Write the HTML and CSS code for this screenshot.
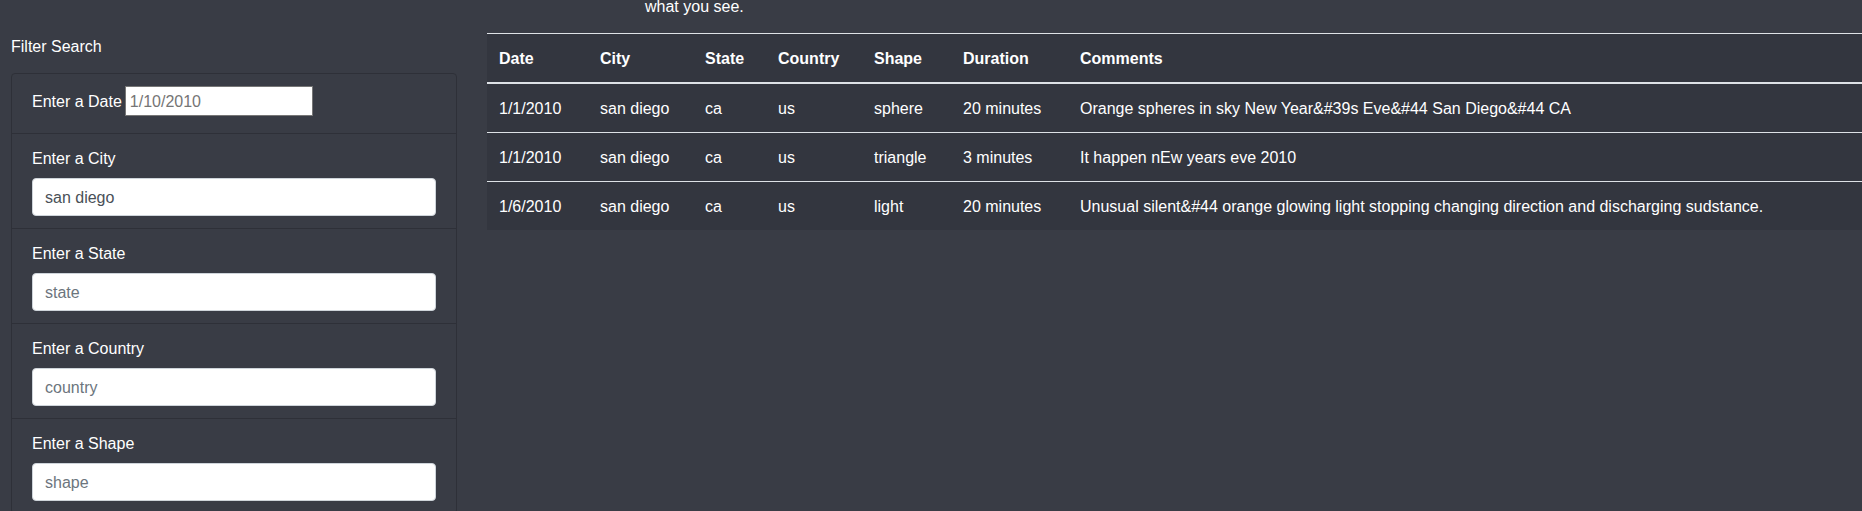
FILE: index.html
```html
<!DOCTYPE html>
<html lang="en">
<head>
<meta charset="utf-8">
<title>UFO Sightings</title>
<link rel="stylesheet" href="styles.css">
</head>
<body>
<div class="page">
  <aside class="sidebar">
    <div class="filter-title">Filter Search</div>
    <ul class="filter-list">
      <li class="filter-item filter-item--inline">
        <label class="filter-label" for="datetime">Enter a Date</label>
        <input class="date-input" id="datetime" type="text" placeholder="1/10/2010">
      </li>
      <li class="filter-item">
        <label class="filter-label" for="city">Enter a City</label>
        <input class="form-input" id="city" type="text" value="san diego" placeholder="city">
      </li>
      <li class="filter-item">
        <label class="filter-label" for="state">Enter a State</label>
        <input class="form-input" id="state" type="text" placeholder="state">
      </li>
      <li class="filter-item">
        <label class="filter-label" for="country">Enter a Country</label>
        <input class="form-input" id="country" type="text" placeholder="country">
      </li>
      <li class="filter-item">
        <label class="filter-label" for="shape">Enter a Shape</label>
        <input class="form-input" id="shape" type="text" placeholder="shape">
      </li>
    </ul>
  </aside>
  <main class="content">
    <p class="intro">what you see.</p>
    <table class="ufo-table">
      <colgroup>
        <col class="col-date">
        <col class="col-city">
        <col class="col-state">
        <col class="col-country">
        <col class="col-shape">
        <col class="col-duration">
        <col class="col-comments">
      </colgroup>
      <thead>
        <tr>
          <th>Date</th>
          <th>City</th>
          <th>State</th>
          <th>Country</th>
          <th>Shape</th>
          <th>Duration</th>
          <th>Comments</th>
        </tr>
      </thead>
      <tbody>
        <tr>
          <td>1/1/2010</td>
          <td>san diego</td>
          <td>ca</td>
          <td>us</td>
          <td>sphere</td>
          <td>20 minutes</td>
          <td>Orange spheres in sky New Year&amp;#39s Eve&amp;#44 San Diego&amp;#44 CA</td>
        </tr>
        <tr>
          <td>1/1/2010</td>
          <td>san diego</td>
          <td>ca</td>
          <td>us</td>
          <td>triangle</td>
          <td>3 minutes</td>
          <td>It happen nEw years eve 2010</td>
        </tr>
        <tr>
          <td>1/6/2010</td>
          <td>san diego</td>
          <td>ca</td>
          <td>us</td>
          <td>light</td>
          <td>20 minutes</td>
          <td>Unusual silent&amp;#44 orange glowing light stopping changing direction and discharging sudstance.</td>
        </tr>
      </tbody>
    </table>
  </main>
</div>
</body>
</html>
```
FILE: styles.css
```css
html, body {
  margin: 0;
  padding: 0;
}

body {
  background: #393c45;
  color: #ffffff;
  font-family: "Liberation Sans", Arial, sans-serif;
  font-size: 16px;
  line-height: 24px;
  overflow: hidden;
}

.page {
  display: flex;
  align-items: flex-start;
  gap: 30px;
  padding-left: 11px;
}

.sidebar {
  flex: 0 0 446px;
  padding-top: 35px;
}

.filter-title {
  line-height: 24px;
  margin-bottom: 14px;
}

.filter-list {
  list-style: none;
  margin: 0;
  padding: 0;
  border: 1px solid #2e3038;
  border-radius: 4px;
}

.filter-item {
  display: flex;
  flex-direction: column;
  padding: 13px 20px 12px;
  border-top: 1px solid #2e3038;
}

.filter-item:first-child {
  border-top: 0;
}

.filter-item--inline {
  flex-direction: row;
  align-items: center;
  gap: 3px;
  padding-top: 12px;
  padding-bottom: 17px;
}

.filter-label {
  line-height: 24px;
  margin-bottom: 7px;
}

.filter-item--inline .filter-label {
  margin-bottom: 0;
  padding-top: 2px;
}

.date-input {
  box-sizing: border-box;
  width: 188px;
  height: 30px;
  margin: 0;
  padding: 2px 4px 0;
  border: 1px solid #767676;
  border-radius: 0;
  background: #ffffff;
  font-family: inherit;
  font-size: 16px;
  color: #495057;
}

.date-input::placeholder {
  color: #757575;
}

.form-input {
  box-sizing: border-box;
  width: 100%;
  height: 38px;
  margin: 0;
  padding: 7px 12px 5px;
  border: 1px solid #ced4da;
  border-radius: 4px;
  background: #ffffff;
  font-family: inherit;
  font-size: 16px;
  color: #495057;
}

.form-input::placeholder {
  color: #6c757d;
}

.content {
  flex: 1 1 auto;
  min-width: 0;
}

.intro {
  margin: -5px 0 14px 158px;
  line-height: 24px;
}

.ufo-table {
  width: 100%;
  table-layout: fixed;
  border-collapse: collapse;
  background: #33363f;
  color: #ffffff;
}

.col-date { width: 101px; }
.col-city { width: 105px; }
.col-state { width: 73px; }
.col-country { width: 96px; }
.col-shape { width: 89px; }
.col-duration { width: 117px; }

.ufo-table th,
.ufo-table td {
  padding: 13px 12px 11px;
  text-align: left;
  vertical-align: top;
  line-height: 24px;
  white-space: nowrap;
  border-top: 1px solid #dee2e6;
}

.ufo-table th {
  font-weight: bold;
  border-bottom: 2px solid #dee2e6;
}

.ufo-table tbody tr:first-child td {
  border-top: 0;
}
```
